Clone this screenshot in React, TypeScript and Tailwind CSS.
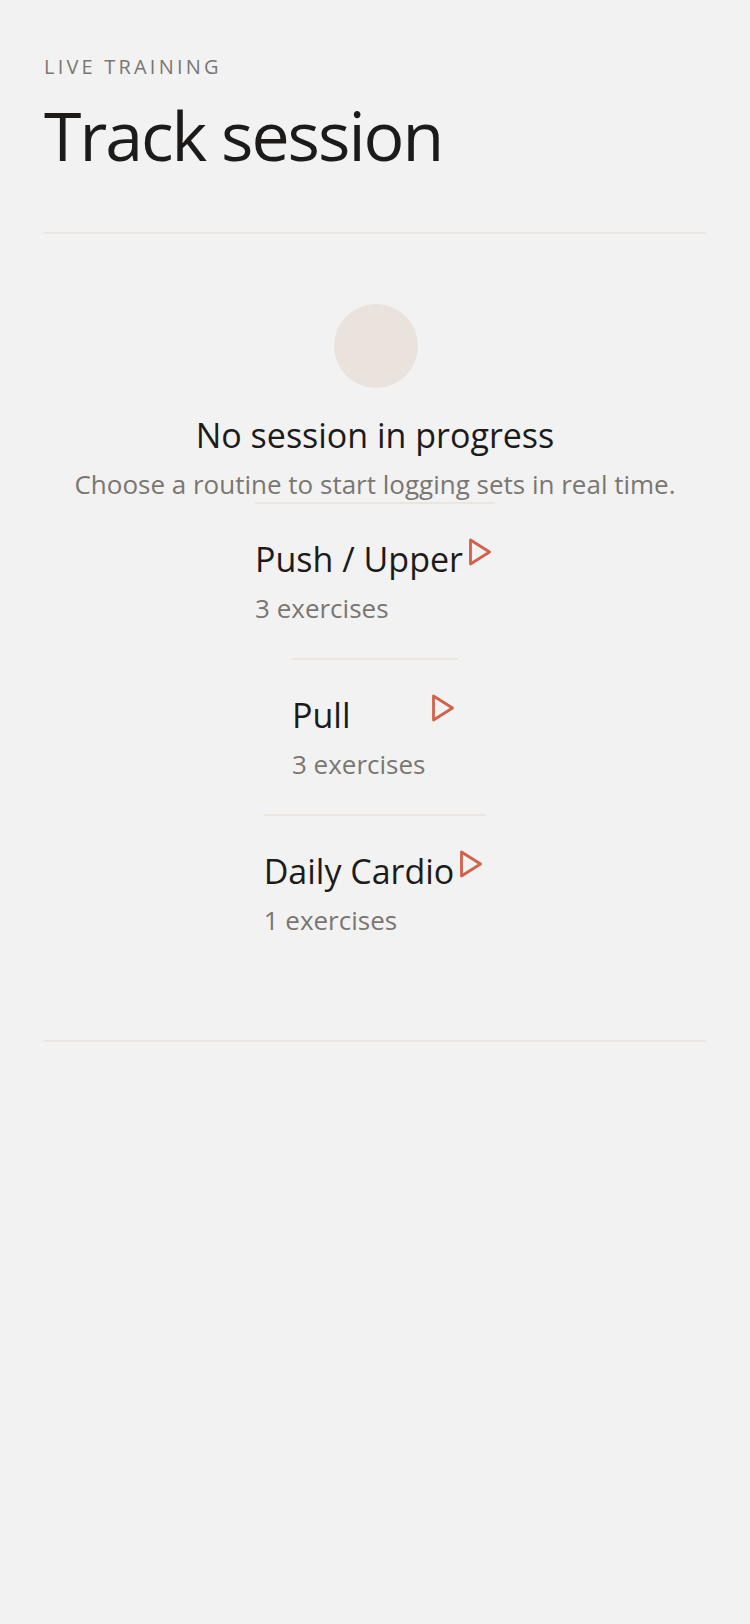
const routines = [
  { name: 'Push / Upper', count: '3 exercises' },
  { name: 'Pull', count: '3 exercises' },
  { name: 'Daily Cardio', count: '1 exercises' },
];

const PlayIcon = () => (
  <svg width="24" height="28" viewBox="0 0 24 28" fill="none" className="mt-[3px] block shrink-0">
    <path d="M3.5 2V26L22.5 14L3.5 2Z" stroke="#d4604a" strokeWidth="2.8" strokeLinejoin="round" />
  </svg>
);

const App = () => {
  return (
    <div className="min-h-[1624px] bg-[#f2f2f2] px-[44px] pt-[52px] font-['Open_Sans',sans-serif]">
      <header className="border-b-2 border-[#ebe5e0] pb-[56px]">
        <p className="text-[20px] leading-[30px] tracking-[3.2px] text-[#7a7672]">LIVE TRAINING</p>
        <h1 className="mt-[12px] text-[68px] leading-[82px] tracking-[-2px] text-[#1c1b1a]">Track session</h1>
      </header>
      <section className="flex flex-col items-center border-b-2 border-[#ebe5e0] pt-[70px] pb-[70px]">
        <div className="ml-[2px] h-[84px] w-[84px] rounded-full bg-[#eae2dc]" />
        <h2 className="mt-[23px] text-[34px] leading-[48px] text-[#1c1b1a]">No session in progress</h2>
        <p className="mt-[7px] text-[26px] leading-[36px] text-[#7a7672]">Choose a routine to start logging sets in real time.</p>
        <ul className="flex flex-col items-center">
          {routines.map((routine) => (
            <li key={routine.name} className="border-t-2 border-[#ebe5e0] pt-[31px] pr-[4px] pb-[32px]">
              <div className="flex items-start gap-[4px]">
                <div className="min-w-[134px]">
                  <p className="text-[34px] leading-[48px] text-[#1c1b1a]">{routine.name}</p>
                  <p className="mt-[7px] text-[26px] leading-[36px] text-[#7a7672]">{routine.count}</p>
                </div>
                <PlayIcon />
              </div>
            </li>
          ))}
        </ul>
      </section>
    </div>
  );
};

export default App;
